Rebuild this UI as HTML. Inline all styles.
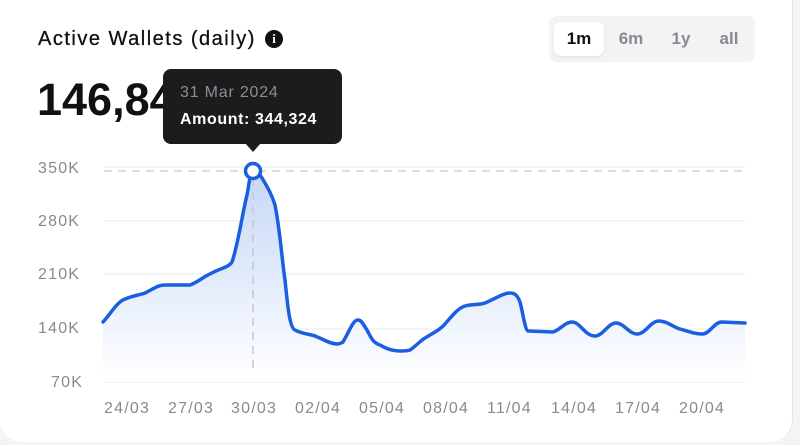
<!DOCTYPE html>
<html><head><style>
body{margin:0;width:800px;height:445px;background:#f4f4f5;overflow:hidden;font-family:"Liberation Sans",sans-serif;position:relative}
.card{position:absolute;left:0;top:-20px;width:792px;height:462px;background:#fff;border-radius:22px;border-right:1px solid #e6e6e8}
.t{position:absolute;left:38px;top:28px;font-size:20px;color:#111;letter-spacing:1.5px;-webkit-text-stroke:0.3px #111}
.i{position:absolute;left:265px;top:30px;width:18px;height:18px;border-radius:50%;background:#111;color:#fff;font:bold 13px "Liberation Serif",serif;text-align:center;line-height:18px}
.big{position:absolute;left:37px;top:74px;font-size:45px;font-weight:bold;color:#111;letter-spacing:0px}
.tabs{position:absolute;left:549px;top:16px;width:206px;height:46px;background:#f2f3f4;border-radius:8px}
.tab{position:absolute;top:6px;height:34px;line-height:34px;font-size:17px;font-weight:bold;color:#8a8a8e;text-align:center}
.tab.on{background:#fff;color:#111;border-radius:7px;box-shadow:0 1px 2px rgba(0,0,0,.08)}
.tip{position:absolute;left:163px;top:69px;width:179px;height:75px;background:#1c1c1e;border-radius:8px}
.tip .d{position:absolute;left:17px;top:15px;font-size:16px;color:#8e8e93;letter-spacing:0.8px}
.tip .a{position:absolute;left:17px;top:42px;font-size:16px;font-weight:bold;color:#fff;letter-spacing:0.6px}
.ar{position:absolute;left:245px;top:143px;width:0;height:0;border-left:8px solid transparent;border-right:8px solid transparent;border-top:9px solid #1c1c1e}
.yl{position:absolute;left:38px;font-size:16px;color:#8a8a8e;letter-spacing:1.2px}
.xl{position:absolute;top:400px;font-size:16px;color:#8a8a8e;letter-spacing:1.2px}
</style></head><body>
<div class="card"></div>
<div class="t">Active Wallets (daily)</div>
<div class="i">i</div>
<div class="big">146,84</div>
<div class="tabs">
<div class="tab on" style="left:5px;width:50px">1m</div>
<div class="tab" style="left:60px;width:44px">6m</div>
<div class="tab" style="left:110px;width:44px">1y</div>
<div class="tab" style="left:158px;width:44px">all</div>
</div>
<svg width="800" height="445" style="position:absolute;left:0;top:0">
<defs><linearGradient id="g" x1="0" y1="0" x2="0" y2="1">
<stop offset="0" stop-color="#bcd0f5"/><stop offset="1" stop-color="#ffffff"/></linearGradient></defs>
<g stroke="#eef0f3" stroke-width="1.5">
<line x1="104" y1="167" x2="745" y2="167"/><line x1="104" y1="221" x2="745" y2="221"/>
<line x1="104" y1="274" x2="745" y2="274"/><line x1="104" y1="329" x2="745" y2="329"/>
<line x1="104" y1="382" x2="745" y2="382"/></g>
<line x1="104" y1="171" x2="745" y2="171" stroke="#d0d0d4" stroke-width="1.5" stroke-dasharray="8,6"/>
<path d="M103,322 C112,312 117,302 125,299 C135,295 140,295 145,293 C155,288 158,285 165,285 L190,285 C198,282 203,277 210,274 C220,268 228,268 232,262 C238,245 243,210 247,195 C249,185 250,172 253,172 C258,172 260,175 262,178 C268,188 272,195 275,205 C280,230 282,260 285,280 C288,310 290,328 295,330 C302,334 310,334 315,336 C323,339 330,344 337,344 C340,344 341,343 343,342 C350,330 353,320 358,320 C362,320 364,326 367,330 C372,340 374,343 380,345 C388,350 395,351 400,351 C405,351 407,351 410,350 C416,346 420,341 425,338 C433,333 440,330 445,324 C452,316 458,308 465,306 C472,304 480,305 485,303 C495,299 503,293 510,293 C516,293 518,297 520,302 C523,313 525,330 528,331 L553,332 C560,330 565,322 572,322 C580,322 585,336 595,336 C603,336 608,323 616,323 C624,323 629,334 637,334 C646,334 650,321 659,321 C667,321 673,327 680,329 C690,332 696,334 702,334 C710,334 714,322 722,322 L745,323 L745,382 L103,382 Z" fill="url(#g)" opacity="0.85"/>
<line x1="253" y1="178" x2="253" y2="372" stroke="#c6c8cf" stroke-width="1.5" stroke-dasharray="8,6"/>
<path d="M103,322 C112,312 117,302 125,299 C135,295 140,295 145,293 C155,288 158,285 165,285 L190,285 C198,282 203,277 210,274 C220,268 228,268 232,262 C238,245 243,210 247,195 C249,185 250,172 253,172 C258,172 260,175 262,178 C268,188 272,195 275,205 C280,230 282,260 285,280 C288,310 290,328 295,330 C302,334 310,334 315,336 C323,339 330,344 337,344 C340,344 341,343 343,342 C350,330 353,320 358,320 C362,320 364,326 367,330 C372,340 374,343 380,345 C388,350 395,351 400,351 C405,351 407,351 410,350 C416,346 420,341 425,338 C433,333 440,330 445,324 C452,316 458,308 465,306 C472,304 480,305 485,303 C495,299 503,293 510,293 C516,293 518,297 520,302 C523,313 525,330 528,331 L553,332 C560,330 565,322 572,322 C580,322 585,336 595,336 C603,336 608,323 616,323 C624,323 629,334 637,334 C646,334 650,321 659,321 C667,321 673,327 680,329 C690,332 696,334 702,334 C710,334 714,322 722,322 L745,323" fill="none" stroke="#1a5fe0" stroke-width="3.5" stroke-linejoin="round" stroke-linecap="round"/>
<circle cx="253" cy="171" r="7.5" fill="#fff" stroke="#1a5fe0" stroke-width="3.5"/>
</svg>
<div class="tip"><div class="d">31 Mar 2024</div><div class="a">Amount: 344,324</div></div>
<div class="ar"></div>
<div class="yl" style="top:160px">350K</div>
<div class="yl" style="top:213px">280K</div>
<div class="yl" style="top:266px">210K</div>
<div class="yl" style="top:320px">140K</div>
<div class="yl" style="top:374px;left:51px">70K</div>
<div class="xl" style="left:104px">24/03</div>
<div class="xl" style="left:168px">27/03</div>
<div class="xl" style="left:231px">30/03</div>
<div class="xl" style="left:295px">02/04</div>
<div class="xl" style="left:359px">05/04</div>
<div class="xl" style="left:423px">08/04</div>
<div class="xl" style="left:487px">11/04</div>
<div class="xl" style="left:551px">14/04</div>
<div class="xl" style="left:615px">17/04</div>
<div class="xl" style="left:679px">20/04</div>
</body></html>
